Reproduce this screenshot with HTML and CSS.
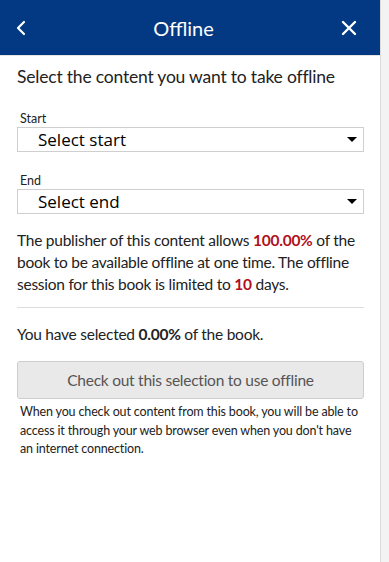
FILE: index.html
```html
<!DOCTYPE html>
<html lang="en">
<head>
    <meta charset="UTF-8">
    <meta name="viewport" content="width=device-width, initial-scale=1.0">
    <title>Offline</title>
    <link rel="stylesheet" href="styles.css">
</head>
<body>
    <div class="panel">
        <div class="header">
            <button class="icon-button" aria-label="Back">
                <svg width="10" height="16" viewBox="0 0 10 16"><polyline points="8,2 2,8 8,14" fill="none" stroke="white" stroke-width="2.2" stroke-linecap="round" stroke-linejoin="round"/></svg>
            </button>
            <h1>Offline</h1>
            <button class="icon-button" aria-label="Close">
                <svg width="16" height="16" viewBox="0 0 16 16"><path d="M2 2 L14 14 M14 2 L2 14" fill="none" stroke="white" stroke-width="2.4" stroke-linecap="round"/></svg>
            </button>
        </div>
        <div class="content">
            <h2>Select the content you want to take offline</h2>

            <div class="field">
                <label>Start</label>
                <div class="select-box"><span>Select start</span><i class="arrow"></i></div>
            </div>
            <div class="field">
                <label>End</label>
                <div class="select-box"><span>Select end</span><i class="arrow"></i></div>
            </div>

            <p class="info">The publisher of this content allows <b class="red">100.00%</b> of the book to be available offline at one time. The offline session for this book is limited to <b class="red">10</b> days.</p>
            <hr>
            <p class="selected">You have selected <b>0.00%</b> of the book.</p>
            <button class="checkout">Check out this selection to use offline</button>
            <p class="note">When you check out content from this book, you will be able to access it through your web browser even when you don't have an internet connection.</p>
        </div>
    </div>
</body>
</html>
```

FILE: styles.css
```css
body {
    margin: 0;
    background-color: #f3f3f3;
    font-family: Lato, "Open Sans", sans-serif;
    color: #222;
}
.panel {
    width: 380px;
    height: 562px;
    background-color: white;
    border-right: 1px solid #dcdcdc;
}
.header {
    height: 55px;
    background-color: #033983;
    display: flex;
    align-items: center;
    padding: 0 23px 0 16px;
    border-bottom: 1px solid #e4e4e4;
}
.header h1 {
    flex: 1;
    margin: 0;
    color: white;
    font-size: 20px;
    font-weight: normal;
    text-align: center;
}
.icon-button {
    background: none;
    border: none;
    padding: 0;
    display: flex;
    align-items: center;
}
.content {
    padding: 0 16px 0 17px;
}
h2 {
    font-size: 17.5px;
    letter-spacing: -0.2px;
    font-weight: normal;
    margin: 9px 0 22px;
    line-height: 24px;
}
.field {
    margin-bottom: 21px;
}
.field:last-of-type {
    margin-bottom: 15px;
}
.field label {
    display: block;
    font-size: 12.5px;
    line-height: 16px;
    padding-left: 3px;
}
.select-box {
    height: 23px;
    border: 1px solid #cfcfcf;
    display: flex;
    align-items: center;
    justify-content: space-between;
    padding: 0 6px 0 20px;
    font-family: "Open Sans", sans-serif;
    font-size: 17px;
    color: black;
}
.arrow {
    width: 0;
    height: 0;
    border-left: 5px solid transparent;
    border-right: 5px solid transparent;
    border-top: 5px solid black;
}
.info {
    font-size: 15.5px;
    letter-spacing: -0.25px;
    line-height: 22px;
    margin: 0 0 12px;
}
.red {
    color: #b0101c;
}
hr {
    border: none;
    border-top: 1px solid #dddddd;
    margin: 0 0 17px;
}
.selected {
    font-size: 15.5px;
    letter-spacing: -0.25px;
    margin: 0 0 18px;
}
.checkout {
    width: 100%;
    height: 38px;
    background-color: #e9e9e9;
    border: 1px solid #cdcdcd;
    border-radius: 3px;
    color: #555;
    font-family: Lato, "Open Sans", sans-serif;
    font-size: 15.5px;
    letter-spacing: -0.25px;
}
.note {
    font-size: 12.5px;
    letter-spacing: -0.15px;
    line-height: 18.5px;
    margin: 4px 0 0 3px;
}
```
